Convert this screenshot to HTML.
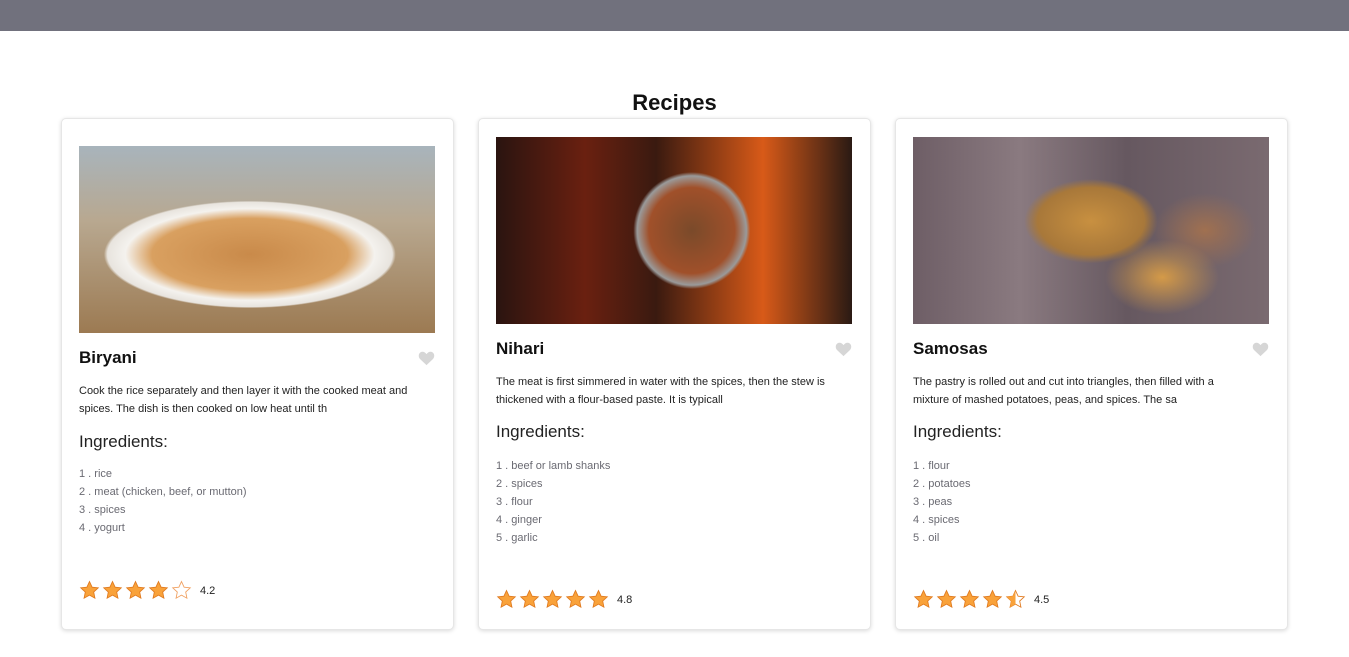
<!DOCTYPE html>
<html><head><meta charset="utf-8"><style>
*{box-sizing:border-box;margin:0;padding:0}
body{width:1349px;height:657px;background:#fff;font-family:"Liberation Sans",sans-serif;position:relative;overflow:hidden;color:#111}
.top{position:absolute;left:0;top:0;width:1349px;height:31px;background:#71717d}
h1{position:absolute;top:90px;left:0;width:1349px;text-align:center;font-size:22px;font-weight:bold;color:#111}
.card{position:absolute;top:118px;width:393px;height:512px;border:1px solid #e6e6e6;border-radius:5px;box-shadow:0 1px 4px rgba(0,0,0,.15);background:#fff}
.img{position:absolute;left:17px;width:356px;height:187px}
.t{position:absolute;left:17px;font-size:17px;font-weight:bold;color:#111}
.heart{position:absolute;right:18px;width:17px;height:16px}
.d{position:absolute;left:17px;width:338px;font-size:11px;line-height:18px;color:#222}
.ih{position:absolute;left:17px;font-size:17px;color:#222}
.l{position:absolute;left:17px;font-size:11px;line-height:18px;color:#6a6a72}
.r{position:absolute;left:17px;display:flex;align-items:center;gap:2px;font-size:11px;color:#222}
.r svg{width:21px;height:21px}
.r span{margin-left:6px}
</style></head><body>
<div class="top"></div>
<h1>Recipes</h1>
<svg width="0" height="0" style="position:absolute"><defs>
<symbol id="s" viewBox="0 0 24 24"><path d="M12 1.8l3 6.4 7 .8-5.2 4.8 1.4 7-6.2-3.5-6.2 3.5 1.4-7L2 9l7-.8z" fill="#f9a23a" stroke="#e07a1f" stroke-width="1"/></symbol>
<symbol id="e" viewBox="0 0 24 24"><path d="M12 1.8l3 6.4 7 .8-5.2 4.8 1.4 7-6.2-3.5-6.2 3.5 1.4-7L2 9l7-.8z" fill="#fff" stroke="#f0a060" stroke-width="1"/></symbol>
<symbol id="h" viewBox="0 0 24 24"><path d="M12 1.8l3 6.4 7 .8-5.2 4.8 1.4 7-6.2-3.5-6.2 3.5 1.4-7L2 9l7-.8z" fill="#fff" stroke="#e07a1f" stroke-width="1"/><path d="M12 1.8l3 6.4 7 .8-5.2 4.8 1.4 7-6.2-3.5-6.2 3.5 1.4-7L2 9l7-.8z" fill="#f9a23a" clip-path="inset(0 50% 0 0)"/></symbol>
<symbol id="ht" viewBox="0 0 24 22"><path d="M12 21L3 12.5C0 9.5 0.5 4 4.5 2.5 7.5 1.5 10 3 12 5.5 14 3 16.5 1.5 19.5 2.5 23.5 4 24 9.5 21 12.5z" fill="#d6d6d6"/></symbol>
</defs></svg>

<div class="card" style="left:61px">
<div class="img" style="top:27px;background:radial-gradient(ellipse 50% 35% at 48% 58%,#c98a4a 0%,#d9a060 55%,#f4f2ee 70%,#e8e4de 80%,transparent 82%),linear-gradient(180deg,#a8b4bc 0%,#b8a890 40%,#9c7a52 100%)"></div>
<div class="t" style="top:229px">Biryani</div><svg class="heart" style="top:231px"><use href="#ht"/></svg>
<div class="d" style="top:263px">Cook the rice separately and then layer it with the cooked meat and spices. The dish is then cooked on low heat until th</div>
<div class="ih" style="top:313px">Ingredients:</div>
<div class="l" style="top:346px">1 . rice<br>2 . meat (chicken, beef, or mutton)<br>3 . spices<br>4 . yogurt</div>
<div class="r" style="top:461px"><svg><use href="#s"/></svg><svg><use href="#s"/></svg><svg><use href="#s"/></svg><svg><use href="#s"/></svg><svg><use href="#e"/></svg><span>4.2</span></div>
</div>

<div class="card" style="left:478px">
<div class="img" style="top:18px;background:radial-gradient(circle 78px at 55% 50%,#7a4a2a 0%,#a0502a 55%,#9a9a9a 70%,transparent 75%),linear-gradient(90deg,#2a1410 0%,#6a2010 25%,#3a1a10 45%,#d85a18 75%,#2a1a14 100%)"></div>
<div class="t" style="top:220px">Nihari</div><svg class="heart" style="top:222px"><use href="#ht"/></svg>
<div class="d" style="top:254px">The meat is first simmered in water with the spices, then the stew is thickened with a flour-based paste. It is typicall</div>
<div class="ih" style="top:303px">Ingredients:</div>
<div class="l" style="top:338px">1 . beef or lamb shanks<br>2 . spices<br>3 . flour<br>4 . ginger<br>5 . garlic</div>
<div class="r" style="top:470px"><svg><use href="#s"/></svg><svg><use href="#s"/></svg><svg><use href="#s"/></svg><svg><use href="#s"/></svg><svg><use href="#s"/></svg><span>4.8</span></div>
</div>

<div class="card" style="left:895px">
<div class="img" style="top:18px;background:radial-gradient(ellipse 25% 30% at 50% 45%,#c89040 0%,#a8783a 60%,transparent 75%),radial-gradient(ellipse 20% 25% at 70% 75%,#d49a48 0%,transparent 80%),radial-gradient(ellipse 18% 25% at 82% 50%,#a07050 0%,transparent 80%),linear-gradient(90deg,#6e5e66,#8a7a80 30%,#665860 60%,#7a6a70)"></div>
<div class="t" style="top:220px">Samosas</div><svg class="heart" style="top:222px"><use href="#ht"/></svg>
<div class="d" style="top:254px;width:330px">The pastry is rolled out and cut into triangles, then filled with a mixture of mashed potatoes, peas, and spices. The sa</div>
<div class="ih" style="top:303px">Ingredients:</div>
<div class="l" style="top:338px">1 . flour<br>2 . potatoes<br>3 . peas<br>4 . spices<br>5 . oil</div>
<div class="r" style="top:470px"><svg><use href="#s"/></svg><svg><use href="#s"/></svg><svg><use href="#s"/></svg><svg><use href="#s"/></svg><svg><use href="#h"/></svg><span>4.5</span></div>
</div>
</body></html>
